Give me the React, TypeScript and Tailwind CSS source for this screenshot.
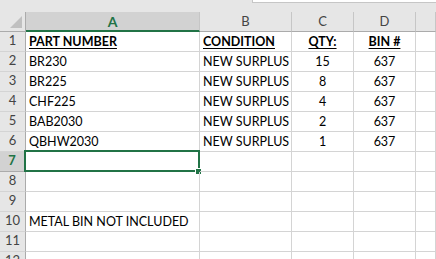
const cols = ["A", "B", "C", "D", "E"];
const widths = ["w-[174px]", "w-[92px]", "w-[62px]", "w-[62px]", "flex-1"];

type Cell = { text: string; bold?: boolean; center?: boolean };

const rows: Cell[][] = [
  [
    { text: "PART NUMBER", bold: true },
    { text: "CONDITION", bold: true },
    { text: "QTY:", bold: true, center: true },
    { text: "BIN #", bold: true, center: true },
  ],
  [{ text: "BR230" }, { text: "NEW SURPLUS" }, { text: "15", center: true }, { text: "637", center: true }],
  [{ text: "BR225" }, { text: "NEW SURPLUS" }, { text: "8", center: true }, { text: "637", center: true }],
  [{ text: "CHF225" }, { text: "NEW SURPLUS" }, { text: "4", center: true }, { text: "637", center: true }],
  [{ text: "BAB2030" }, { text: "NEW SURPLUS" }, { text: "2", center: true }, { text: "637", center: true }],
  [{ text: "QBHW2030" }, { text: "NEW SURPLUS" }, { text: "1", center: true }, { text: "637", center: true }],
  [],
  [],
  [],
  [{ text: "METAL BIN NOT INCLUDED" }],
  [],
  [],
];

export default function App() {
  return (
    <div
      className="w-[436px] h-[259px] overflow-hidden bg-white text-black flex flex-col"
      style={{ fontFamily: "Lato, 'Liberation Sans', sans-serif" }}
    >
      {/* formula bar edge */}
      <div className="h-[12px] shrink-0 bg-[#e6e6e6] flex">
        <div className="w-[252px]" />
        <div className="flex-1 h-[3px] bg-white border-b border-l border-[#c6c6c6]" />
      </div>

      {/* column headers */}
      <div className="flex h-[20px] shrink-0 bg-[#e6e6e6] text-[13px] text-[#444]">
        <div className="w-[26px] h-full border-r border-b border-[#ababab] flex items-end justify-end pr-[3px] pb-[3px]">
          <svg width="12" height="12" viewBox="0 0 12 12">
            <path d="M12 0 L12 12 L0 12 Z" fill="#c0c0c0" />
          </svg>
        </div>
        {cols.map((c, i) =>
          i === 0 ? (
            <div
              key={c}
              className={`${widths[i]} h-full bg-[#d2d2d2] border-r border-[#c6c6c6] border-b-2 border-b-[#217346] flex items-center justify-center font-bold text-[#217346] text-[14px]`}
            >
              {c}
            </div>
          ) : (
            <div
              key={c}
              className={`${widths[i]} h-full border-r border-b border-[#c6c6c6] border-b-[#ababab] flex items-center justify-center`}
            >
              {i < 4 ? c : ""}
            </div>
          )
        )}
      </div>

      {/* rows */}
      {rows.map((row, r) => {
        const sel = r === 6;
        return (
          <div key={r} className="flex h-[20px] shrink-0 text-[12.5px] leading-none">
            <div
              className={`w-[26px] h-full border-r border-b flex items-end justify-center pb-[4px] text-[13px] ${
                sel
                  ? "bg-[#d2d2d2] text-[#217346] font-bold border-[#ababab] border-r-[#217346] border-r-2"
                  : "bg-[#e6e6e6] text-[#444] border-[#ababab] border-b-[#d4d4d4]"
              }`}
            >
              {r + 1}
            </div>
            {cols.map((c, i) => {
              const cell = row[i];
              return (
                <div
                  key={c}
                  className={`${widths[i]} h-full border-r border-b border-[#d4d4d4] flex items-end pb-[3px] whitespace-nowrap relative ${
                    cell?.center ? "justify-center" : "pl-[3px]"
                  }`}
                >
                  {cell && (
                    <span className={cell.bold ? "font-bold underline decoration-1 underline-offset-2" : ""}>{cell.text}</span>
                  )}
                  {sel && i === 0 && (
                    <>
                      <div className="absolute left-[-2px] top-[-2px] right-[-1px] bottom-[-1px] border-2 border-[#217346]" />
                      <div className="absolute right-[-3px] bottom-[-4px] w-[7px] h-[7px] bg-white p-[1px]">
                        <div className="w-full h-full bg-[#217346]" />
                      </div>
                    </>
                  )}
                </div>
              );
            })}
          </div>
        );
      })}
    </div>
  );
}
